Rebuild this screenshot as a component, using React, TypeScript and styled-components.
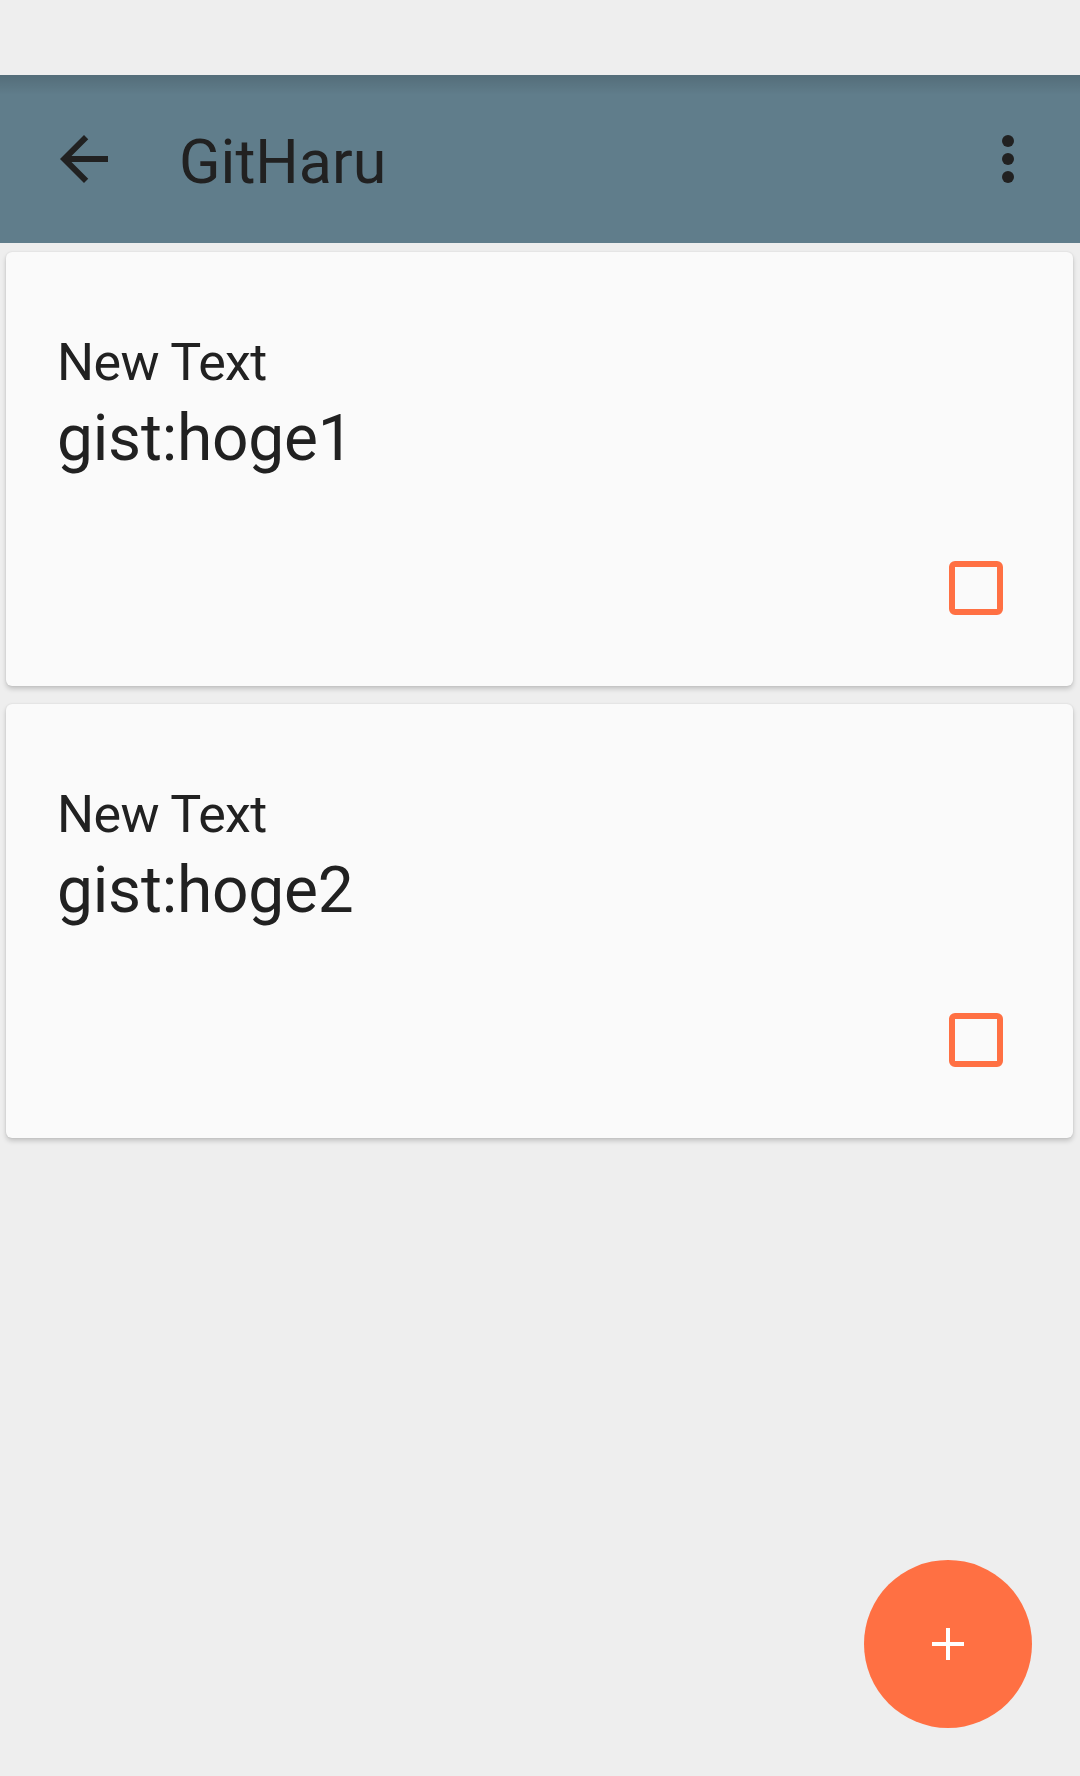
import React from "react";
import styled, { createGlobalStyle } from "styled-components";

const Global = createGlobalStyle`
  html, body {
    margin: 0;
    padding: 0;
    background: #eeeeee;
    font-family: Roboto, "Noto Sans", "Liberation Sans", sans-serif;
  }
`;

const Screen = styled.div`
  min-height: 100vh;
  background: #eeeeee;
  display: flex;
  flex-direction: column;
`;

const StatusBar = styled.div`
  height: 75px;
  background: #eeeeee;
`;

const Toolbar = styled.header`
  height: 168px;
  box-sizing: border-box;
  display: flex;
  align-items: center;
  padding: 0 36px 0 48px;
  background: linear-gradient(to bottom, rgba(0, 0, 0, 0.13), rgba(0, 0, 0, 0) 20px), #607d8b;
`;

const IconButton = styled.button`
  width: 72px;
  height: 72px;
  padding: 0;
  border: none;
  background: transparent;
  display: flex;
  align-items: center;
  justify-content: center;
  color: #212121;
  cursor: pointer;
`;

const Title = styled.h1`
  flex: 1;
  margin: 0 0 0 59px;
  padding-top: 6px;
  font-size: 61px;
  line-height: 60px;
  font-weight: 400;
  color: #212121;
`;

const List = styled.main`
  display: flex;
  flex-direction: column;
  gap: 18px;
  padding: 9px 7px 0 6px;
`;

const Card = styled.section`
  height: 434px;
  box-sizing: border-box;
  display: flex;
  flex-direction: column;
  padding: 79px 70px 71px 51px;
  background: #fafafa;
  border-radius: 6px;
  box-shadow: 0 3px 5px rgba(0, 0, 0, 0.18), 0 0 2px rgba(0, 0, 0, 0.1);
`;

const Label = styled.div`
  font-size: 52px;
  line-height: 64px;
  letter-spacing: -0.6px;
  color: #212121;
`;

const GistName = styled.div`
  margin-top: 5px;
  font-size: 64px;
  line-height: 78px;
  letter-spacing: -0.2px;
  color: #212121;
`;

const CheckBox = styled.span`
  margin-top: auto;
  align-self: flex-end;
  width: 54px;
  height: 54px;
  box-sizing: border-box;
  border: 6px solid #ff7043;
  border-radius: 6px;
`;

const Fab = styled.button`
  position: fixed;
  right: 48px;
  bottom: 48px;
  width: 168px;
  height: 168px;
  border-radius: 50%;
  border: none;
  padding: 0;
  background: #ff7043;
  display: flex;
  align-items: center;
  justify-content: center;
  cursor: pointer;
`;

const BackIcon = () => (
  <svg width="72" height="72" viewBox="0 0 24 24" fill="currentColor">
    <path d="M20 11H7.83l5.59-5.59L12 4l-8 8 8 8 1.41-1.41L7.83 13H20v-2z" />
  </svg>
);

const MoreIcon = () => (
  <svg width="72" height="72" viewBox="0 0 24 24" fill="currentColor">
    <circle cx="12" cy="6" r="2" />
    <circle cx="12" cy="12" r="2" />
    <circle cx="12" cy="18" r="2" />
  </svg>
);

const PlusIcon = () => (
  <svg width="32" height="32" viewBox="0 0 32 32">
    <rect x="14" y="0" width="4" height="32" fill="#fff" />
    <rect x="0" y="14" width="32" height="4" fill="#fff" />
  </svg>
);

const gists = ["gist:hoge1", "gist:hoge2"];

export default function App() {
  return (
    <Screen>
      <Global />
      <StatusBar />
      <Toolbar>
        <IconButton aria-label="back">
          <BackIcon />
        </IconButton>
        <Title>GitHaru</Title>
        <IconButton aria-label="more">
          <MoreIcon />
        </IconButton>
      </Toolbar>
      <List>
        {gists.map((g) => (
          <Card key={g}>
            <Label>New Text</Label>
            <GistName>{g}</GistName>
            <CheckBox />
          </Card>
        ))}
      </List>
      <Fab aria-label="add">
        <PlusIcon />
      </Fab>
    </Screen>
  );
}
